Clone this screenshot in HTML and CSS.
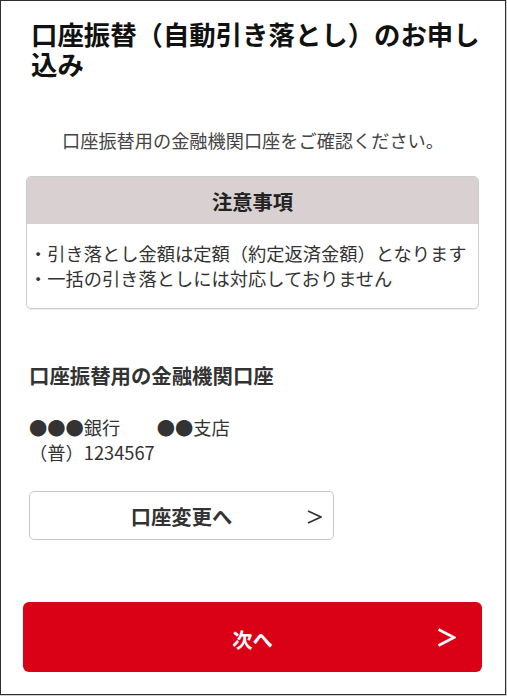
FILE: index.html
```html
<!DOCTYPE html>
<html lang="ja">
<head>
<meta charset="utf-8">
<title>口座振替（自動引き落とし）のお申し込み</title>
<link rel="stylesheet" href="styles.css">
</head>
<body>
<div class="frame">
  <h1 class="title">口座振替（自動引き落とし）のお申し込み</h1>
  <p class="lead">口座振替用の金融機関口座をご確認ください。</p>
  <section class="notice">
    <h2 class="notice-head">注意事項</h2>
    <ul class="notice-list">
      <li>・引き落とし金額は定額（約定返済金額）となります</li>
      <li>・一括の引き落としには対応しておりません</li>
    </ul>
  </section>
  <h2 class="section-title">口座振替用の金融機関口座</h2>
  <div class="account">
    <div>●●●銀行　　●●支店</div>
    <div>（普）1234567</div>
  </div>
  <a class="btn-change" href="#">
    <span class="btn-spacer"></span>
    <span class="btn-label">口座変更へ</span>
    <span class="btn-icon">
      <svg width="15" height="14" viewBox="0 0 15 14"><polyline points="1,1 14,7 1,13" fill="none" stroke="#333" stroke-width="1.7" stroke-linejoin="miter"/></svg>
    </span>
  </a>
  <a class="btn-next" href="#">
    <span class="btn-spacer"></span>
    <span class="btn-label">次へ</span>
    <span class="btn-icon">
      <svg width="19" height="19" viewBox="0 0 19 19"><polyline points="1.5,1.5 17,9.5 1.5,17.5" fill="none" stroke="#fff" stroke-width="2.6" stroke-linejoin="miter"/></svg>
    </span>
  </a>
</div>
</body>
</html>
```
FILE: styles.css
```css
html, body {
  margin: 0;
  padding: 0;
  background: #cfcfcf;
}
body {
  font-family: "Noto Sans CJK JP", "Noto Sans", sans-serif;
  color: #333;
}
.frame {
  width: 506px;
  height: 695px;
  box-sizing: border-box;
  border: 1px solid #2e2e2e;
  background: #fff;
  overflow: hidden;
}
.title {
  margin: 18px 20px 0 30px;
  font-size: 26.4px;
  line-height: 30px;
  font-weight: 700;
  color: #111;
}
.lead {
  margin: 48px 0 0;
  text-align: center;
  font-size: 18.2px;
  line-height: 26px;
  color: #444;
}
.notice {
  margin: 23px 26px 0 25px;
  border: 1px solid #cdcdcd;
  border-radius: 5px;
  overflow: hidden;
  box-shadow: 0 1px 1px rgba(0,0,0,0.08);
}
.notice-head {
  margin: 0;
  height: 47px;
  display: flex;
  align-items: center;
  justify-content: center;
  background: #d9d0d1;
  font-size: 20.3px;
  font-weight: 700;
  color: #222;
}
.notice-list {
  list-style: none;
  margin: 0;
  padding: 17px 4px 17px 2px;
  font-size: 18.25px;
  line-height: 25px;
  color: #333;
}
.section-title {
  margin: 52px 20px 0 28px;
  font-size: 20.4px;
  line-height: 28px;
  font-weight: 700;
  color: #333;
}
.account {
  margin: 26px 20px 0 28px;
  font-size: 18.25px;
  line-height: 25px;
  color: #333;
}
.btn-change {
  margin: 26px 0 0 28px;
  width: 305px;
  height: 49px;
  box-sizing: border-box;
  border: 1px solid #c8c8c8;
  border-radius: 5px;
  display: grid;
  grid-template-columns: 1fr auto 1fr;
  align-items: center;
  text-decoration: none;
  color: #333;
  font-size: 20.3px;
  font-weight: 700;
  background: #fff;
}
.btn-change .btn-icon {
  justify-self: end;
  padding-right: 11px;
  display: flex;
  padding-top: 2px;
}
.btn-next {
  margin: 62px 0 0 22px;
  width: 459px;
  height: 70px;
  box-sizing: border-box;
  border-radius: 6px;
  background: #da0016;
  display: grid;
  grid-template-columns: 1fr auto 1fr;
  align-items: center;
  text-decoration: none;
  color: #fff;
  font-size: 20.3px;
  font-weight: 700;
}
.btn-next .btn-label {
  padding-top: 3px;
}
.btn-next .btn-icon {
  justify-self: end;
  padding-right: 26px;
  display: flex;
}
```
